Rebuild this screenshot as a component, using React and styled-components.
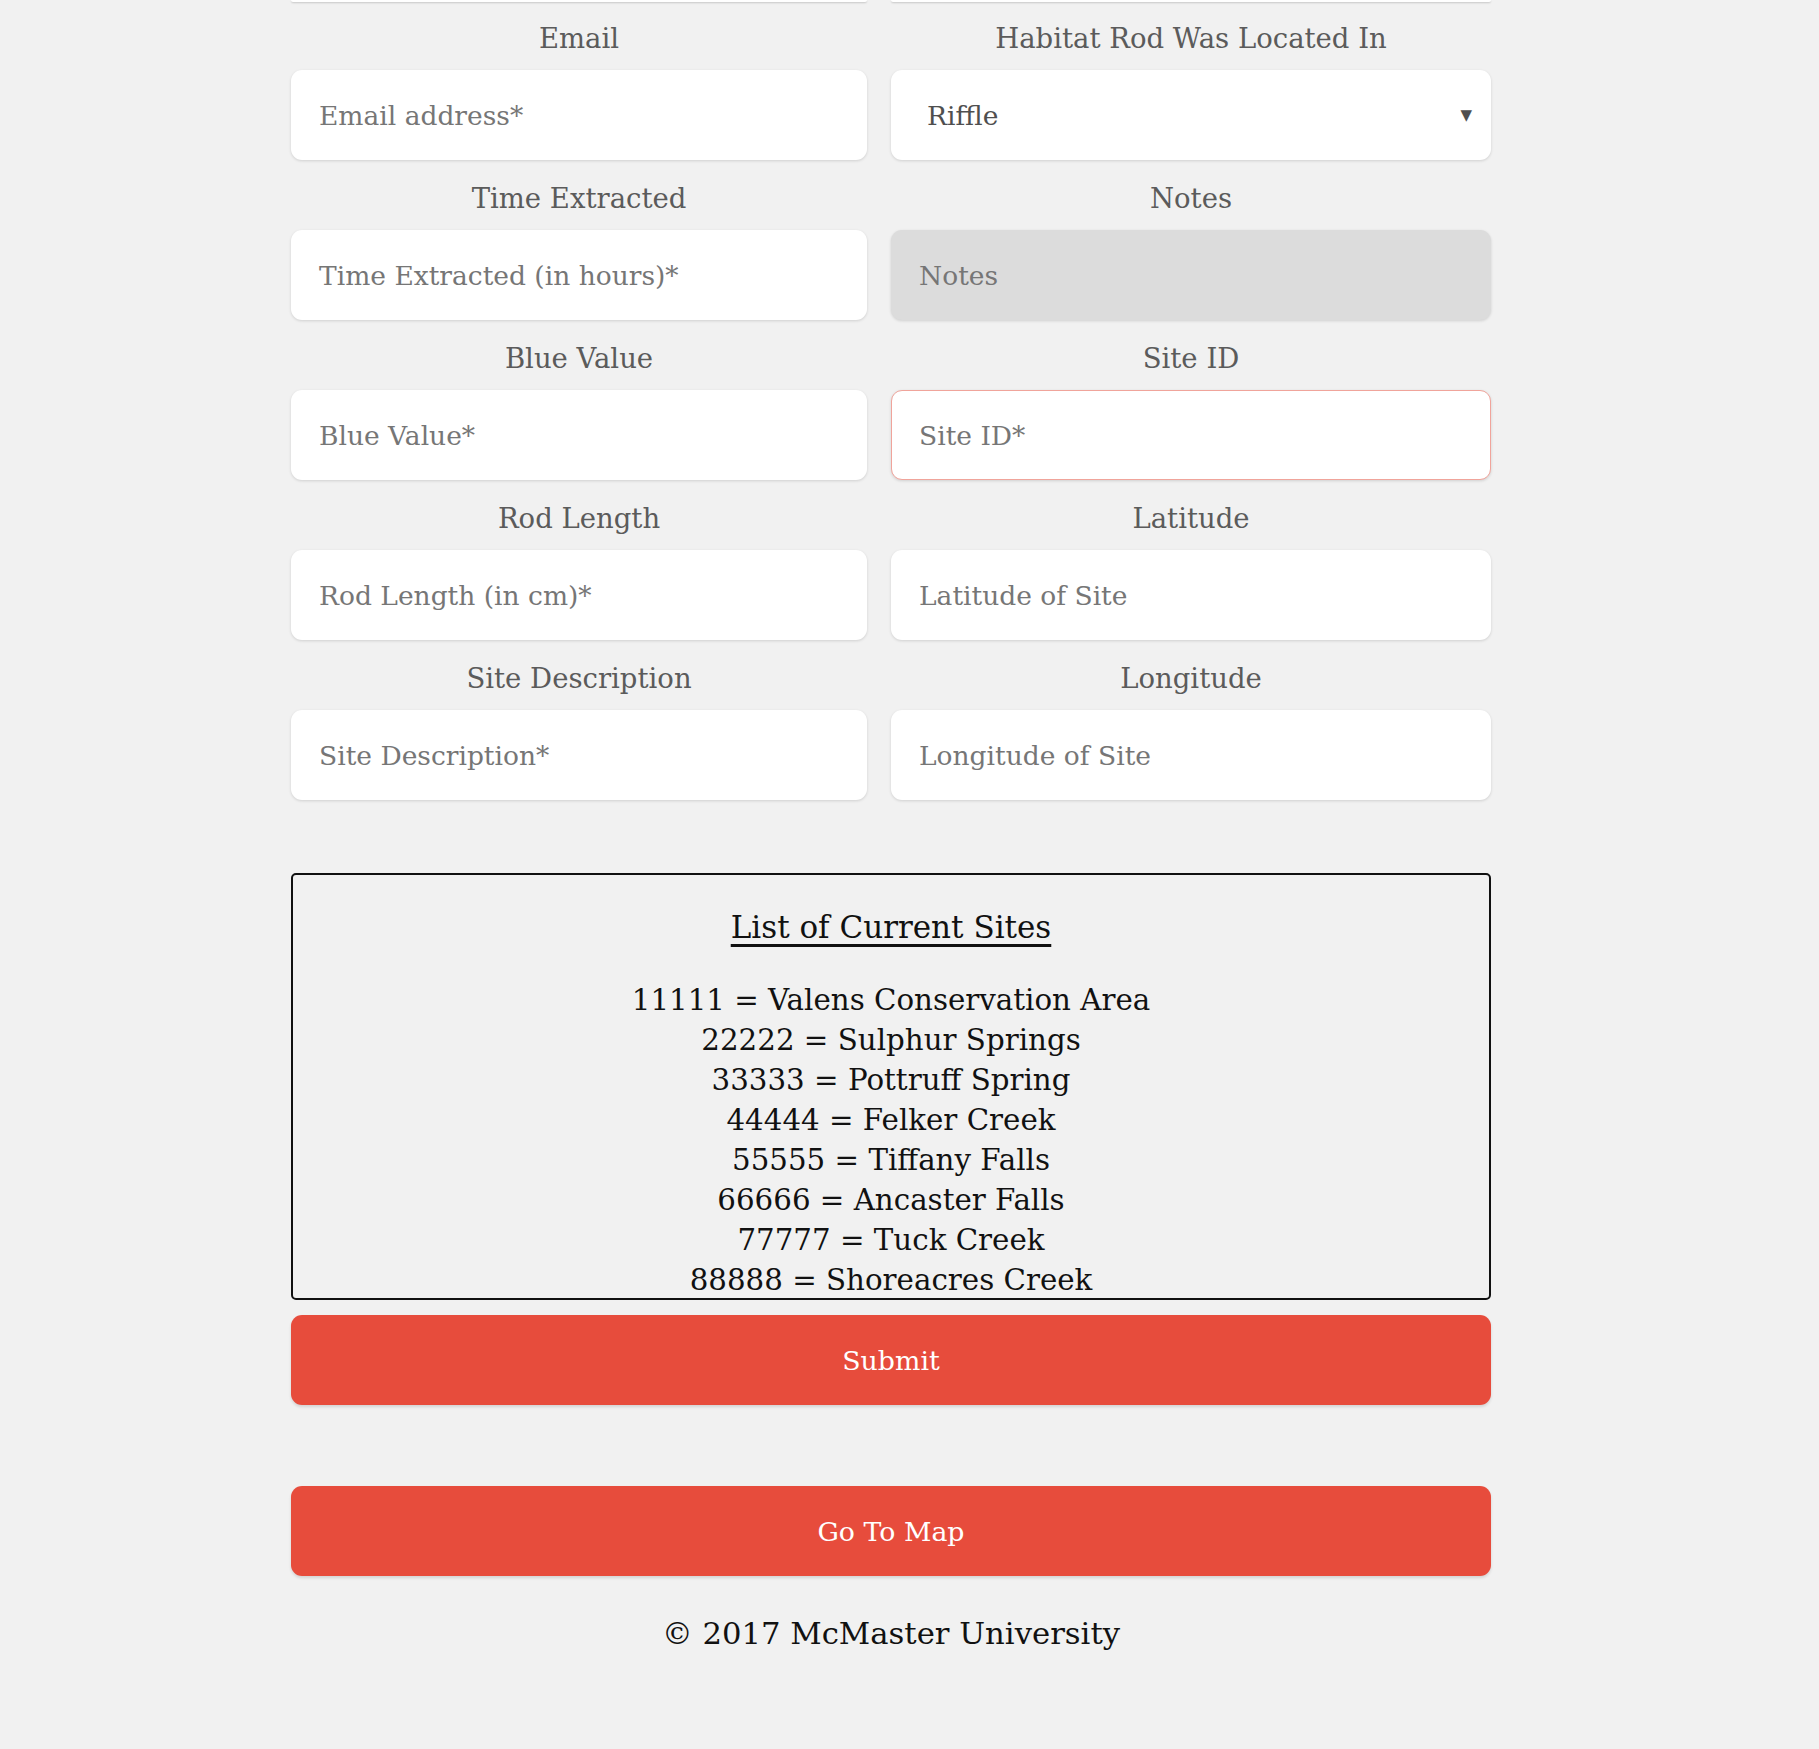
import React from "react";
import styled, { createGlobalStyle } from "styled-components";

const GlobalStyle = createGlobalStyle`
html, body {
  margin: 0;
  padding: 0;
  background: #f1f1f1;
}
body {
  font-family: "DejaVu Serif", "Liberation Serif", serif;
}
`
const Page = styled.div`
width: 1200px;
margin-left: 291px;
padding-bottom: 90px;
`
const TopEdge = styled.div`
display: grid;
grid-template-columns: 576px 600px;
column-gap: 24px;
height: 3px;
`
const EdgePiece = styled.div`
height: 2px;
background: #fff;
border-radius: 0 0 10px 10px;
box-shadow: 0 1px 2px rgba(0, 0, 0, 0.18);
`
const FormGrid = styled.div`
display: grid;
grid-template-columns: 576px 600px;
column-gap: 24px;
margin-top: -3px;
`
const Field = styled.div`
display: flex;
flex-direction: column;
`
const Label = styled.div`
box-sizing: border-box;
height: 70px;
padding-top: 5px;
display: flex;
align-items: center;
justify-content: center;
color: #5b5b5b;
font-size: 27.5px;
`
const Input = styled.div`
box-sizing: border-box;
height: 90px;
display: flex;
align-items: center;
justify-content: space-between;
padding: 0 ${p => (p.select ? "18px 0 35px" : "27px")};
border-radius: 11px;
background: ${p => (p.disabled ? "#dcdcdc" : "#fff")};
border: 1px solid ${p => (p.invalid ? "#f0a49b" : "transparent")};
box-shadow: 0 1px 3px rgba(0, 0, 0, 0.14);
color: ${p => (p.select ? "#4f4f4f" : "#767676")};
font-size: 26.5px;
`
const Arrow = styled.span`
font-size: 15px;
color: #4f4f4f;
`
const SiteBox = styled.div`
margin-top: 73px;
box-sizing: border-box;
height: 427px;
border: 2px solid #111;
border-radius: 5px;
text-align: center;
color: #111;
padding-top: 34px;
`
const SiteTitle = styled.div`
display: inline-block;
font-size: 31px;
text-decoration: underline;
text-underline-offset: 6px;
margin-bottom: 35px;
`
const SiteLine = styled.div`
font-size: 29.3px;
line-height: 40px;
`
const RedButton = styled.div`
height: 90px;
margin-top: ${p => p.top}px;
border-radius: 11px;
background: #e74c3c;
box-shadow: 0 2px 3px rgba(0, 0, 0, 0.12);
color: #fff;
font-size: 26.8px;
display: flex;
align-items: center;
justify-content: center;
`
const Footer = styled.div`
margin-top: 40px;
text-align: center;
font-size: 30.7px;
color: #111;
`

const fields = [
  ["Email", "Email address*", "Habitat Rod Was Located In", "Riffle", "select"],
  ["Time Extracted", "Time Extracted (in hours)*", "Notes", "Notes", "disabled"],
  ["Blue Value", "Blue Value*", "Site ID", "Site ID*", "invalid"],
  ["Rod Length", "Rod Length (in cm)*", "Latitude", "Latitude of Site"],
  ["Site Description", "Site Description*", "Longitude", "Longitude of Site"],
];

const sites = [
  "11111 = Valens Conservation Area",
  "22222 = Sulphur Springs",
  "33333 = Pottruff Spring",
  "44444 = Felker Creek",
  "55555 = Tiffany Falls",
  "66666 = Ancaster Falls",
  "77777 = Tuck Creek",
  "88888 = Shoreacres Creek",
];

function App() {
  return (
    <Page>
      <GlobalStyle />
      <TopEdge>
        <EdgePiece />
        <EdgePiece />
      </TopEdge>
      <FormGrid>
        {fields.map(([l1, p1, l2, p2, kind]) => (
          <React.Fragment key={l1}>
            <Field>
              <Label>{l1}</Label>
              <Input>{p1}</Input>
            </Field>
            <Field>
              <Label>{l2}</Label>
              <Input
                select={kind === "select"}
                disabled={kind === "disabled"}
                invalid={kind === "invalid"}
              >
                {p2}
                {kind === "select" && <Arrow>▼</Arrow>}
              </Input>
            </Field>
          </React.Fragment>
        ))}
      </FormGrid>
      <SiteBox>
        <SiteTitle>List of Current Sites</SiteTitle>
        {sites.map(s => (
          <SiteLine key={s}>{s}</SiteLine>
        ))}
      </SiteBox>
      <RedButton top={15}>Submit</RedButton>
      <RedButton top={81}>Go To Map</RedButton>
      <Footer>© 2017 McMaster University</Footer>
    </Page>
  );
}

export default App;
